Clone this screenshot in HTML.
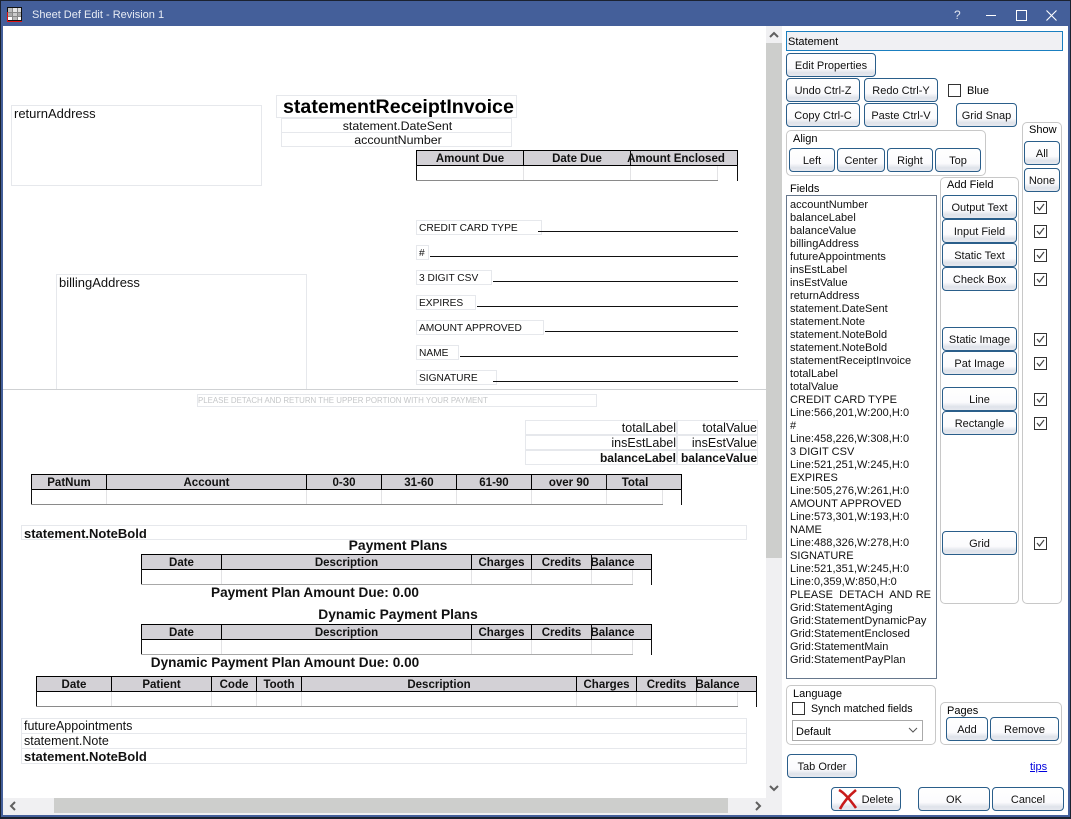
<!DOCTYPE html>
<html><head><meta charset="utf-8"><title>Sheet Def Edit - Revision 1</title>
<style>
html,body{margin:0;padding:0;}
body{width:1071px;height:819px;position:relative;overflow:hidden;background:#fff;font-family:"Liberation Sans",sans-serif;font-size:11px;color:#000;}
div,span,svg{position:absolute;box-sizing:border-box;}
.t{white-space:nowrap;line-height:14px;font-size:11px;margin-top:1px;}
.b{border:1px solid #e6e8ec;white-space:nowrap;overflow:hidden;color:#111;}
.fl{font-size:10.2px;line-height:15px;padding-left:2px;height:15px;}
.tt{height:15px;font-size:12.5px;line-height:14px;text-align:right;border-right:0;box-shadow:1px 0 0 #e6e8ec;}
.h{background:#d3d1d6;border:1px solid #000;border-width:1px 0 1px 0;height:16px;}
.hc{top:0;height:14px;border-right:1px solid #000;font-weight:bold;font-size:11.5px;line-height:16px;text-align:center;color:#111;white-space:nowrap;}
.c{background:#e3e3e5;width:1px;}
.l{background:#111;height:1px;}
.btn{border:1px solid #2a5e8a;border-radius:4px;background:linear-gradient(#ffffff 0,#fbfbfd 65%,#dfe3ea 85%,#e6e9ef 100%);text-align:center;font-size:11px;line-height:25px;color:#111;white-space:nowrap;}
.grp{border:1px solid #c8c8c8;border-radius:5px;}
.ck{width:13px;height:13px;border:1px solid #333;background:#fff;}
.ck svg{left:0;top:0;}
.title{font-weight:bold;font-size:13.6px;line-height:16px;white-space:nowrap;text-align:center;color:#111;margin-top:1px;}
</style></head><body>
<!-- frame -->
<div style="left:0;top:0;width:1071px;height:819px;background:#445f9a;border:1px solid #1b2230;border-width:1px 1px 2px 1px;"></div>
<div style="left:3px;top:26px;width:1065px;height:789px;background:#fff;"></div>
<svg style="left:7px;top:7px" width="15" height="15" viewBox="0 0 15 15"><rect x="0" y="0" width="15" height="15" fill="#111"/><rect x="1" y="1" width="13" height="12" fill="#888"/><rect x="1" y="1" width="4" height="4" fill="#bbb"/><rect x="6" y="1" width="4" height="4" fill="#e8e8e8"/><rect x="11" y="1" width="3" height="4" fill="#ddd"/><rect x="1" y="6" width="4" height="3" fill="#aaa"/><rect x="6" y="6" width="4" height="3" fill="#ccc"/><rect x="11" y="6" width="3" height="3" fill="#aaa"/><rect x="1" y="10" width="4" height="3" fill="#fff"/><rect x="6" y="10" width="4" height="3" fill="#bbb"/><rect x="11" y="10" width="3" height="3" fill="#fff"/><path d="M0.5 5V14.5H15" stroke="#e01010" fill="none"/></svg>
<div class="t" style="left:32px;top:7px;color:#e8ecf4;font-size:11px;">Sheet Def Edit - Revision 1</div>
<div class="t" style="left:954px;top:7px;color:#dfe4ef;font-size:12px;">?</div>
<div style="left:986px;top:15px;width:10px;height:1px;background:#fff;"></div>
<div style="left:1016px;top:10px;width:11px;height:11px;border:1px solid #fff;"></div>
<svg style="left:1046px;top:10px" width="11" height="11"><path d="M0.5 0.5L10.5 10.5M10.5 0.5L0.5 10.5" stroke="#fff" stroke-width="1.1"/></svg>

<!-- scrollbars -->
<div style="left:766px;top:26px;width:16px;height:772px;background:#f0f0f2;"></div>
<div style="left:766px;top:43px;width:16px;height:515px;background:#cdcecc;"></div>
<svg style="left:768px;top:30px" width="12" height="10"><path d="M2 7L6 3L10 7" stroke="#606060" stroke-width="2" fill="none"/></svg>
<svg style="left:768px;top:783px" width="12" height="10"><path d="M2 3L6 7L10 3" stroke="#606060" stroke-width="2" fill="none"/></svg>
<div style="left:3px;top:798px;width:779px;height:17px;background:#f0f0f2;"></div>
<div style="left:54px;top:798px;width:674px;height:15px;background:#cdcecc;"></div>
<svg style="left:8px;top:800px" width="10" height="12"><path d="M7 2L3 6L7 10" stroke="#606060" stroke-width="2" fill="none"/></svg>
<svg style="left:753px;top:800px" width="10" height="12"><path d="M3 2L7 6L3 10" stroke="#606060" stroke-width="2" fill="none"/></svg>

<!-- sheet -->
<div class="b" style="left:11px;top:105px;width:251px;height:81px;font-size:13px;line-height:15px;padding:0 0 0 2px;">returnAddress</div>
<div class="b" style="left:276px;top:95px;width:241px;height:23px;font-size:19.6px;font-weight:bold;line-height:23px;padding-left:6px;color:#000;">statementReceiptInvoice</div>
<div class="b" style="left:281px;top:118px;width:231px;height:15px;font-size:12.4px;line-height:14px;text-align:center;padding-left:2px;">statement.DateSent</div>
<div class="b" style="left:281px;top:132px;width:231px;height:15px;font-size:12.4px;line-height:14px;text-align:center;padding-left:3px;">accountNumber</div>
<div class="b" style="left:56px;top:274px;width:251px;height:116px;font-size:13px;line-height:15px;padding:0 0 0 2px;">billingAddress</div>

<!-- grid amount -->
<div class="h" style="left:416px;top:150px;width:322px;border-left:1px solid #000;border-right:1px solid #000;">
<div class="hc" style="left:0;width:107px;">Amount Due</div><div class="hc" style="left:107px;width:107px;">Date Due</div><div class="hc" style="left:206px;width:106px;border-right:0;">Amount Enclosed</div></div>
<div style="left:416px;top:165px;width:1px;height:16px;background:#111;"></div>
<div style="left:737px;top:165px;width:1px;height:16px;background:#111;"></div>
<div style="left:630px;top:150px;width:1px;height:15px;background:#111;"></div>
<div class="c" style="left:523px;top:166px;height:14px;"></div><div class="c" style="left:630px;top:166px;height:14px;"></div><div class="c" style="left:717px;top:166px;height:14px;"></div>
<div style="left:416px;top:180px;width:302px;height:1px;background:#8a8a8a;"></div>

<!-- card fields -->
<div class="b fl" style="left:416px;top:220px;width:126px;">CREDIT CARD TYPE</div><div class="l" style="left:538px;top:231px;width:200px;"></div>
<div class="b fl" style="left:416px;top:245px;width:13px;">#</div><div class="l" style="left:430px;top:256px;width:308px;"></div>
<div class="b fl" style="left:416px;top:270px;width:76px;">3 DIGIT CSV</div><div class="l" style="left:493px;top:281px;width:245px;"></div>
<div class="b fl" style="left:416px;top:295px;width:60px;">EXPIRES</div><div class="l" style="left:477px;top:306px;width:261px;"></div>
<div class="b fl" style="left:416px;top:320px;width:128px;">AMOUNT APPROVED</div><div class="l" style="left:545px;top:331px;width:193px;"></div>
<div class="b fl" style="left:416px;top:345px;width:43px;">NAME</div><div class="l" style="left:460px;top:356px;width:278px;"></div>
<div class="b fl" style="left:416px;top:370px;width:81px;">SIGNATURE</div><div class="l" style="left:493px;top:381px;width:245px;"></div>

<div style="left:3px;top:389px;width:763px;height:1px;background:#cfd1d3;"></div>
<div class="b" style="left:197px;top:394px;width:400px;height:13px;font-size:7.9px;line-height:11px;padding-left:0;color:#c4c6c8;">PLEASE DETACH AND RETURN THE UPPER PORTION WITH YOUR PAYMENT</div>

<!-- totals -->
<div class="b tt" style="left:525px;top:420px;width:151px;">totalLabel</div>
<div class="b tt" style="left:677px;top:420px;width:80px;">totalValue</div>
<div class="b tt" style="left:525px;top:435px;width:151px;">insEstLabel</div>
<div class="b tt" style="left:677px;top:435px;width:80px;">insEstValue</div>
<div class="b tt" style="left:525px;top:450px;width:151px;font-weight:bold;font-size:12px;">balanceLabel</div>
<div class="b tt" style="left:677px;top:450px;width:80px;font-weight:bold;font-size:12px;">balanceValue</div>

<!-- grid aging -->
<div class="h" style="left:31px;top:474px;width:651px;border-left:1px solid #000;border-right:1px solid #000;">
<div class="hc" style="left:0;width:75px;">PatNum</div><div class="hc" style="left:75px;width:200px;">Account</div><div class="hc" style="left:275px;width:75px;">0-30</div><div class="hc" style="left:350px;width:75px;">31-60</div><div class="hc" style="left:425px;width:75px;">61-90</div><div class="hc" style="left:500px;width:75px;">over 90</div><div class="hc" style="left:566px;width:74px;border-right:0;">Total</div></div>
<div style="left:606px;top:474px;width:1px;height:15px;background:#111;"></div>
<div style="left:31px;top:489px;width:1px;height:16px;background:#111;"></div><div style="left:681px;top:489px;width:1px;height:16px;background:#111;"></div>
<div class="c" style="left:106px;top:490px;height:14px;"></div><div class="c" style="left:306px;top:490px;height:14px;"></div><div class="c" style="left:381px;top:490px;height:14px;"></div><div class="c" style="left:456px;top:490px;height:14px;"></div><div class="c" style="left:531px;top:490px;height:14px;"></div><div class="c" style="left:606px;top:490px;height:14px;"></div><div class="c" style="left:662px;top:490px;height:14px;"></div>
<div style="left:31px;top:504px;width:632px;height:1px;background:#8a8a8a;"></div>

<div class="b" style="left:21px;top:525px;width:726px;height:15px;font-size:13px;font-weight:bold;line-height:15px;padding-left:2px;">statement.NoteBold</div>
<div style="left:141px;top:526px;width:8px;height:3px;background:#fff;"></div>

<div class="title" style="left:198px;top:536px;width:400px;font-size:13.9px;">Payment Plans</div>
<div class="h" style="left:141px;top:554px;width:511px;border-left:1px solid #000;border-right:1px solid #000;">
<div class="hc" style="left:0;width:80px;">Date</div><div class="hc" style="left:80px;width:250px;">Description</div><div class="hc" style="left:330px;width:60px;">Charges</div><div class="hc" style="left:390px;width:60px;">Credits</div><div class="hc" style="left:441px;width:59px;border-right:0;">Balance</div></div>
<div style="left:591px;top:554px;width:1px;height:15px;background:#111;"></div>
<div style="left:141px;top:569px;width:1px;height:16px;background:#111;"></div><div style="left:651px;top:569px;width:1px;height:16px;background:#111;"></div>
<div class="c" style="left:221px;top:570px;height:14px;"></div><div class="c" style="left:471px;top:570px;height:14px;"></div><div class="c" style="left:531px;top:570px;height:14px;"></div><div class="c" style="left:591px;top:570px;height:14px;"></div><div class="c" style="left:632px;top:570px;height:14px;"></div>
<div style="left:141px;top:584px;width:492px;height:1px;background:#a8a8a8;"></div>
<div class="title" style="left:115px;top:584px;width:400px;">Payment Plan Amount Due: 0.00</div>

<div class="title" style="left:198px;top:606px;width:400px;font-size:13.8px;">Dynamic Payment Plans</div>
<div class="h" style="left:141px;top:624px;width:511px;border-left:1px solid #000;border-right:1px solid #000;">
<div class="hc" style="left:0;width:80px;">Date</div><div class="hc" style="left:80px;width:250px;">Description</div><div class="hc" style="left:330px;width:60px;">Charges</div><div class="hc" style="left:390px;width:60px;">Credits</div><div class="hc" style="left:441px;width:59px;border-right:0;">Balance</div></div>
<div style="left:591px;top:624px;width:1px;height:15px;background:#111;"></div>
<div style="left:141px;top:639px;width:1px;height:16px;background:#111;"></div><div style="left:651px;top:639px;width:1px;height:16px;background:#111;"></div>
<div class="c" style="left:221px;top:640px;height:14px;"></div><div class="c" style="left:471px;top:640px;height:14px;"></div><div class="c" style="left:531px;top:640px;height:14px;"></div><div class="c" style="left:591px;top:640px;height:14px;"></div><div class="c" style="left:632px;top:640px;height:14px;"></div>
<div style="left:141px;top:654px;width:492px;height:1px;background:#a8a8a8;"></div>
<div class="title" style="left:85px;top:654px;width:400px;">Dynamic Payment Plan Amount Due: 0.00</div>

<div class="h" style="left:36px;top:676px;width:721px;border-left:1px solid #000;border-right:1px solid #000;">
<div class="hc" style="left:0;width:75px;">Date</div><div class="hc" style="left:75px;width:100px;">Patient</div><div class="hc" style="left:175px;width:45px;">Code</div><div class="hc" style="left:220px;width:45px;">Tooth</div><div class="hc" style="left:265px;width:275px;">Description</div><div class="hc" style="left:540px;width:60px;">Charges</div><div class="hc" style="left:600px;width:60px;">Credits</div><div class="hc" style="left:651px;width:59px;border-right:0;">Balance</div></div>
<div style="left:696px;top:676px;width:1px;height:15px;background:#111;"></div>
<div style="left:36px;top:691px;width:1px;height:16px;background:#111;"></div><div style="left:756px;top:691px;width:1px;height:16px;background:#111;"></div>
<div class="c" style="left:111px;top:692px;height:14px;"></div><div class="c" style="left:211px;top:692px;height:14px;"></div><div class="c" style="left:256px;top:692px;height:14px;"></div><div class="c" style="left:301px;top:692px;height:14px;"></div><div class="c" style="left:576px;top:692px;height:14px;"></div><div class="c" style="left:636px;top:692px;height:14px;"></div><div class="c" style="left:696px;top:692px;height:14px;"></div><div class="c" style="left:737px;top:692px;height:14px;"></div>
<div style="left:36px;top:706px;width:702px;height:1px;background:#8a8a8a;"></div>

<div class="b" style="left:21px;top:718px;width:726px;height:16px;font-size:12.5px;line-height:14px;padding-left:2px;">futureAppointments</div>
<div class="b" style="left:21px;top:733px;width:726px;height:16px;font-size:12.5px;line-height:14px;padding-left:2px;">statement.Note</div>
<div class="b" style="left:21px;top:748px;width:726px;height:16px;font-size:13px;font-weight:bold;line-height:15px;padding-left:2px;">statement.NoteBold</div>

<!-- right panel -->
<div style="left:786px;top:31px;width:277px;height:20px;border:1px solid #1a7fc0;background:#f0f0f3;font-size:11px;line-height:20px;padding-left:1px;">Statement</div>
<div class="btn" style="left:786px;top:53px;width:90px;height:24px;">Edit Properties</div>
<div class="btn" style="left:786px;top:78px;width:74px;height:24px;">Undo Ctrl-Z</div>
<div class="btn" style="left:864px;top:78px;width:74px;height:24px;">Redo Ctrl-Y</div>
<div class="ck" style="left:948px;top:84px;"></div>
<div class="t" style="left:967px;top:83px;">Blue</div>
<div class="btn" style="left:786px;top:103px;width:74px;height:24px;">Copy Ctrl-C</div>
<div class="btn" style="left:864px;top:103px;width:74px;height:24px;">Paste Ctrl-V</div>
<div class="btn" style="left:956px;top:103px;width:61px;height:24px;">Grid Snap</div>

<div class="grp" style="left:786px;top:130px;width:200px;height:46px;"></div>
<div class="t" style="left:793px;top:131px;background:#fff;">Align</div>
<div class="btn" style="left:789px;top:148px;width:46px;height:24px;">Left</div>
<div class="btn" style="left:837px;top:148px;width:48px;height:24px;">Center</div>
<div class="btn" style="left:887px;top:148px;width:46px;height:24px;">Right</div>
<div class="btn" style="left:935px;top:148px;width:46px;height:24px;">Top</div>

<div class="grp" style="left:1022px;top:122px;width:40px;height:482px;"></div>
<div class="t" style="left:1029px;top:122px;background:#fff;">Show</div>
<div class="btn" style="left:1024px;top:141px;width:36px;height:24px;">All</div>
<div class="btn" style="left:1024px;top:168px;width:36px;height:24px;">None</div>

<div class="t" style="left:790px;top:181px;">Fields</div>
<div style="left:786px;top:195px;width:151px;height:484px;border:1px solid #66778c;background:#fff;"></div>
<div style="left:790px;top:199px;line-height:13px;font-size:11px;letter-spacing:.03px;white-space:nowrap;color:#111;">accountNumber<br>balanceLabel<br>balanceValue<br>billingAddress<br>futureAppointments<br>insEstLabel<br>insEstValue<br>returnAddress<br>statement.DateSent<br>statement.Note<br>statement.NoteBold<br>statement.NoteBold<br>statementReceiptInvoice<br>totalLabel<br>totalValue<br>CREDIT CARD TYPE<br>Line:566,201,W:200,H:0<br>#<br>Line:458,226,W:308,H:0<br>3 DIGIT CSV<br>Line:521,251,W:245,H:0<br>EXPIRES<br>Line:505,276,W:261,H:0<br>AMOUNT APPROVED<br>Line:573,301,W:193,H:0<br>NAME<br>Line:488,326,W:278,H:0<br>SIGNATURE<br>Line:521,351,W:245,H:0<br>Line:0,359,W:850,H:0<br>PLEASE&nbsp; DETACH&nbsp; AND RE<br>Grid:StatementAging<br>Grid:StatementDynamicPay<br>Grid:StatementEnclosed<br>Grid:StatementMain<br>Grid:StatementPayPlan</div>

<div class="grp" style="left:940px;top:177px;width:79px;height:427px;"></div>
<div class="t" style="left:947px;top:177px;background:#fff;">Add Field</div>
<div class="btn" style="left:942px;top:195px;width:75px;height:24px;">Output Text</div>
<div class="btn" style="left:942px;top:219px;width:75px;height:24px;">Input Field</div>
<div class="btn" style="left:942px;top:243px;width:75px;height:24px;">Static Text</div>
<div class="btn" style="left:942px;top:267px;width:75px;height:24px;">Check Box</div>
<div class="btn" style="left:942px;top:327px;width:75px;height:24px;">Static Image</div>
<div class="btn" style="left:942px;top:351px;width:75px;height:24px;">Pat Image</div>
<div class="btn" style="left:942px;top:387px;width:75px;height:24px;">Line</div>
<div class="btn" style="left:942px;top:411px;width:75px;height:24px;">Rectangle</div>
<div class="btn" style="left:942px;top:531px;width:75px;height:24px;">Grid</div>

<div class="ck" style="left:1034px;top:201px;"><svg width="11" height="11"><path d="M2 5L4.5 8L9 2" stroke="#444" stroke-width="1.2" fill="none"/></svg></div>
<div class="ck" style="left:1034px;top:225px;"><svg width="11" height="11"><path d="M2 5L4.5 8L9 2" stroke="#444" stroke-width="1.2" fill="none"/></svg></div>
<div class="ck" style="left:1034px;top:249px;"><svg width="11" height="11"><path d="M2 5L4.5 8L9 2" stroke="#444" stroke-width="1.2" fill="none"/></svg></div>
<div class="ck" style="left:1034px;top:273px;"><svg width="11" height="11"><path d="M2 5L4.5 8L9 2" stroke="#444" stroke-width="1.2" fill="none"/></svg></div>
<div class="ck" style="left:1034px;top:333px;"><svg width="11" height="11"><path d="M2 5L4.5 8L9 2" stroke="#444" stroke-width="1.2" fill="none"/></svg></div>
<div class="ck" style="left:1034px;top:357px;"><svg width="11" height="11"><path d="M2 5L4.5 8L9 2" stroke="#444" stroke-width="1.2" fill="none"/></svg></div>
<div class="ck" style="left:1034px;top:393px;"><svg width="11" height="11"><path d="M2 5L4.5 8L9 2" stroke="#444" stroke-width="1.2" fill="none"/></svg></div>
<div class="ck" style="left:1034px;top:417px;"><svg width="11" height="11"><path d="M2 5L4.5 8L9 2" stroke="#444" stroke-width="1.2" fill="none"/></svg></div>
<div class="ck" style="left:1034px;top:537px;"><svg width="11" height="11"><path d="M2 5L4.5 8L9 2" stroke="#444" stroke-width="1.2" fill="none"/></svg></div>

<div class="grp" style="left:786px;top:685px;width:150px;height:60px;"></div>
<div class="t" style="left:793px;top:686px;background:#fff;">Language</div>
<div class="ck" style="left:792px;top:702px;"></div>
<div class="t" style="left:811px;top:701px;font-size:10.7px;">Synch matched fields</div>
<div style="left:792px;top:720px;width:131px;height:21px;border:1px solid #aaa;background:#fff;line-height:22px;padding-left:3px;">Default</div>
<svg style="left:908px;top:727px" width="10" height="7"><path d="M1 1L5 5L9 1" stroke="#555" fill="none"/></svg>

<div class="grp" style="left:940px;top:702px;width:122px;height:43px;"></div>
<div class="t" style="left:947px;top:703px;background:#fff;">Pages</div>
<div class="btn" style="left:946px;top:717px;width:42px;height:24px;">Add</div>
<div class="btn" style="left:990px;top:717px;width:69px;height:24px;">Remove</div>

<div class="btn" style="left:787px;top:754px;width:70px;height:24px;">Tab Order</div>
<div class="t" style="left:1030px;top:759px;color:#0000dd;text-decoration:underline;">tips</div>
<div class="btn" style="left:831px;top:787px;width:70px;height:24px;padding-left:23px;">Delete</div>
<svg style="left:836px;top:787px" width="24" height="24"><path d="M3 3C9 6 15 14 20 21M20 3C14 8 8 14 4 22" stroke="#c81a1a" stroke-width="2.6" fill="none"/></svg>
<div class="btn" style="left:918px;top:787px;width:72px;height:24px;">OK</div>
<div class="btn" style="left:992px;top:787px;width:72px;height:24px;">Cancel</div>
</body></html>
